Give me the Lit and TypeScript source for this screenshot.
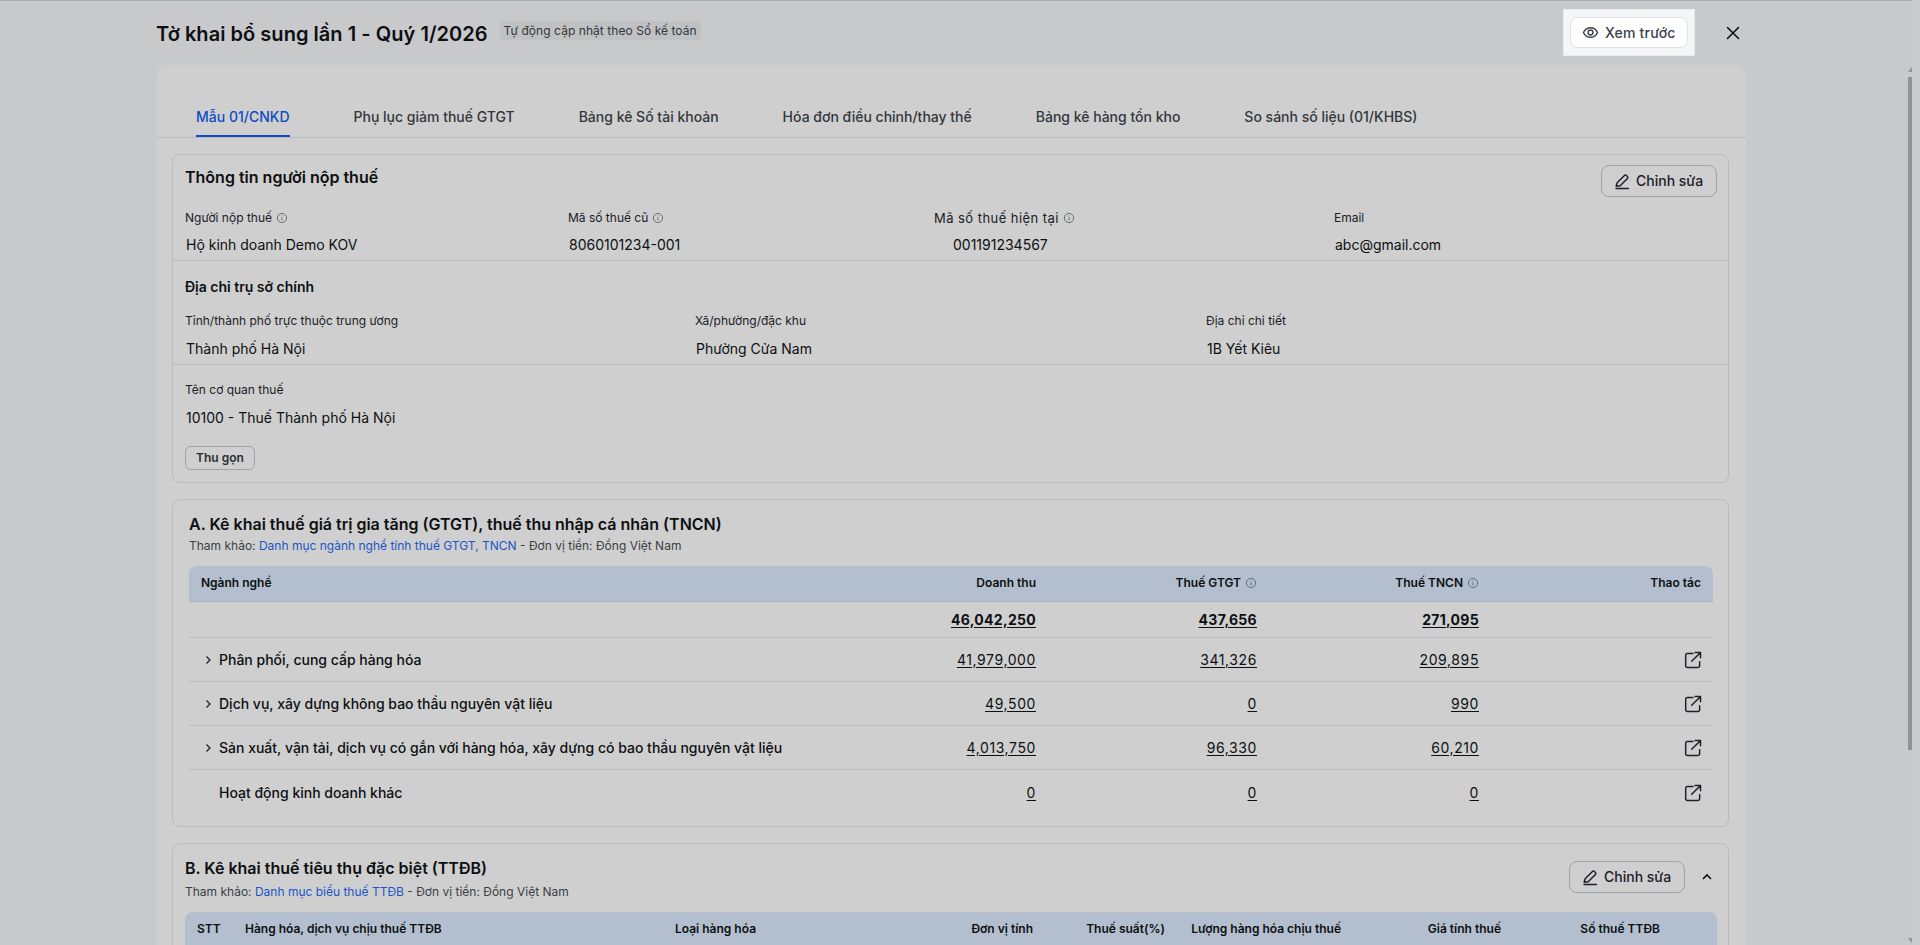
import { LitElement, html, css, svg } from 'lit';
import { customElement } from 'lit/decorators.js';

const infoIcon = html`<svg class="info" viewBox="0 0 12 12" fill="none" stroke="currentColor" stroke-width="1"><circle cx="6" cy="6" r="4.6"></circle><path d="M6 5.4v3M6 3.4v.9"></path></svg>`;
const penIcon = html`<svg class="pen" viewBox="0 0 16 16" fill="none" stroke="currentColor" stroke-width="1.4" stroke-linecap="round" stroke-linejoin="round"><path d="M2 12.4 3 9.2 9.8 2.4a1.3 1.3 0 0 1 1.9 0l.9.9a1.3 1.3 0 0 1 0 1.9L5.800 12z"></path><path d="M2 14.600h11.500"></path></svg>`;
const linkIcon = html`<svg class="open" viewBox="0 0 16 16" fill="none" stroke="currentColor" stroke-width="1.3" stroke-linecap="round" stroke-linejoin="round"><path d="M8 2.300H3a1.500 1.500 0 0 0-1.500 1.500v9.400A1.500 1.500 0 0 0 3 14.700h9.400a1.500 1.500 0 0 0 1.500-1.500V9.500"></path><path d="M6.800 9.200 14.500 1.500M9.800 1.300h4.900v4.800"></path></svg>`;
const chevronRight = svg`<path d="M3.500 1.500 7 5 3.500 8.500"></path>`;

const TABS = ['Mẫu 01/CNKD', 'Phụ lục giảm thuế GTGT', 'Bảng kê Số tài khoản', 'Hóa đơn điều chỉnh/thay thế', 'Bảng kê hàng tồn kho', 'So sánh số liệu (01/KHBS)'];

const ROWS = [
  { name: 'Phân phối, cung cấp hàng hóa', rev: '41,979,000', vat: '341,326', pit: '209,895', more: true },
  { name: 'Dịch vụ, xây dựng không bao thầu nguyên vật liệu', rev: '49,500', vat: '0', pit: '990', more: true },
  { name: 'Sản xuất, vận tải, dịch vụ có gắn với hàng hóa, xây dựng có bao thầu nguyên vật liệu', rev: '4,013,750', vat: '96,330', pit: '60,210', more: true },
  { name: 'Hoạt động kinh doanh khác', rev: '0', vat: '0', pit: '0', more: false },
];

@customElement('app-root')
export class AppRoot extends LitElement {
  static styles = css`
    :host {
      display: block;
      position: relative;
      height: 945px;
      overflow: hidden;
      background: #c8c9cb;
      color: #0d0f12;
      font-family: Inter, "Noto Sans", sans-serif;
      font-size: 14px;
      line-height: 20px;
    }
    svg { display: block; flex: none; }
    .info { width: 12px; height: 12px; color: #6a6e73; }
    .pen { width: 17px; height: 17px; }
    .open { width: 18px; height: 18px; margin-right: -1px; color: #1c2026; }

    .top {
      display: flex;
      height: 64px;
      border-top: 1px solid #a9acaf;
      padding-left: 156px;
      box-sizing: content-box;
    }
    .title { margin: 21px 0 0; font-size: 20px; line-height: 24px; font-weight: 600; letter-spacing: 0.04px; }
    .tag {
      align-self: flex-start;
      margin: 20px 0 0 12px;
      padding: 0 4px;
      height: 19px;
      line-height: 19px;
      font-size: 12px;
      letter-spacing: 0.06px;
      color: #33373c;
      background: #bfc1c3;
      border-radius: 4px;
    }
    .spot {
      align-self: flex-start;
      margin: 8px 0 0 auto;
      padding: 7px 6px;
      background: #f5f6f8;
      border: 1px solid #e9eaec;
    }
    .preview {
      display: flex;
      align-items: center;
      gap: 6px;
      box-sizing: border-box;
      width: 118px;
      height: 31px;
      padding-left: 11px;
      background: #fff;
      border: 1px solid #dfe1e4;
      border-radius: 8px;
      color: #3c4148;
      font-weight: 500;
      font-size: 14px;
      letter-spacing: 0.2px;
    }
    .preview svg { width: 17px; height: 17px; }
    .close { width: 16px; height: 16px; margin: 24px 179px 0 30px; color: #0d0f12; }

    .sheet {
      width: 1590px;
      margin-left: 156px;
      height: 880px;
      background: #cfcfcf;
      border-radius: 12px 12px 0 0;
    }
    .tabs {
      display: flex;
      gap: 64px;
      height: 73px;
      box-sizing: border-box;
      padding-left: 40px;
      border-bottom: 1px solid #b9bbbe;
      align-items: flex-end;
    }
    .tab {
      height: 30px;
      box-sizing: border-box;
      font-weight: 500;
      color: #33373c;
      white-space: nowrap;
    }
    .tab.on { color: #0f4cc4; border-bottom: 2px solid #0f4cc4; }

    .card {
      margin: 16px 17px 0 16px;
      border: 1px solid #b9bbbe;
      border-radius: 8px;
    }
    .info-card { height: 329px; box-sizing: border-box; }
    .head {
      display: flex;
      justify-content: space-between;
      height: 53px;
      padding: 10px 11px 0 12px;
      box-sizing: border-box;
    }
    .head h3 { margin: 1px 0 0; font-size: 16px; line-height: 22px; font-weight: 600; }
    .edit {
      display: flex;
      align-items: center;
      gap: 5px;
      box-sizing: border-box;
      width: 116px;
      height: 32px;
      padding-left: 12px;
      border: 1px solid #a0a3a7;
      border-radius: 8px;
      font-weight: 500;
      color: #1c2026;
    }
    .fields {
      display: grid;
      grid-template-columns: 383px 366px 400px 1fr;
      padding: 0 12px 5px;
      height: 53px;
      box-sizing: border-box;
      border-bottom: 1px solid #b9bbbe;
    }
    .label { display: flex; align-items: center; gap: 4px; font-size: 12px; color: #1c2026; }
    .label.wide { font-size: 13px; letter-spacing: 0.45px; }
    .value { margin: 7px 0 0 1px; font-size: 14px; }
    .value.indent { margin-left: 19px; }
    .address { padding: 16px 12px 5px; border-bottom: 1px solid #b9bbbe; }
    .address h4 { margin: 0 0 14px; font-size: 14px; line-height: 20px; font-weight: 600; }
    .address-grid { display: grid; grid-template-columns: 510px 511px 1fr; }
    .address .value, .authority .value { margin-top: 8px; }
    .authority { padding: 15px 12px 0; }
    .collapse {
      margin-top: 18px;
      width: 70px;
      height: 24px;
      box-sizing: border-box;
      border: 1px solid #a0a3a7;
      border-radius: 6px;
      text-align: center;
      line-height: 22px;
      font-size: 12px;
      font-weight: 600;
      color: #2a2e34;
    }

    .sec-a { height: 328px; box-sizing: border-box; padding: 12px 15px 0 16px; }
    .sec-title { margin: 0; font-size: 16px; line-height: 24px; font-weight: 600; }
    .sub { margin: 1px 0 0; line-height: 18px; font-size: 12px; color: #3b4046; }
    .sub a { color: #1a55c6; }

    .table-a { margin-top: 11px; }
    .row {
      display: grid;
      grid-template-columns: 1fr 200px 221px 222px 222px;
      padding: 0 12px;
      align-items: center;
      height: 44px;
      border-bottom: 1px solid #b9bbbe;
      box-sizing: border-box;
    }
    .row > :not(:first-child) { justify-self: end; }
    .row.hd {
      height: 36px;
      align-items: start;
      padding-top: 7px;
      background: #b3bfce;
      border-bottom-color: #a5b4c9;
      border-radius: 8px 8px 0 0;
      font-size: 12px;
      font-weight: 600;
    }
    .row.total { height: 36px; font-weight: 700; letter-spacing: 0.3px; }
    .row.last { border-bottom: none; height: 46px; }
    .with-info { display: flex; align-items: center; gap: 4px; }
    .name { display: flex; align-items: center; gap: 6px; font-weight: 500; white-space: nowrap; }
    .name .chev { width: 10px; height: 10px; margin-left: 2px; stroke: #1c2026; stroke-width: 1.3; fill: none; }
    .name .blank { width: 10px; height: 10px; margin-left: 2px; }
    .num { text-decoration: underline; text-underline-offset: 2px; }
    .row:not(.total) .num { letter-spacing: 0.6px; }

    .sec-b { padding: 0 11px 0 12px; height: 200px; box-sizing: border-box; }
    .b-head { display: flex; justify-content: space-between; }
    .b-text { padding-top: 12px; }
    .b-text .sub { margin-top: 3px; }
    .b-actions { display: flex; align-items: flex-start; margin-top: 17px; }
    .b-actions .up { width: 12px; height: 12px; margin: 10px 4px 0 16px; stroke: #0d0f12; stroke-width: 1.6; fill: none; }
    .table-b {
      display: grid;
      grid-template-columns: 48px 430px 258px 100px 132px 176px 160px 159px;
      margin-top: 11px;
      height: 60px;
      padding: 7px 0 0 12px;
      box-sizing: border-box;
      background: #b3bfce;
      border-radius: 8px 8px 0 0;
      font-size: 12px;
      font-weight: 600;
    }
    .table-b .r { text-align: right; }

    .thumb { position: absolute; left: 1908px; top: 77px; width: 4px; height: 673px; background: #8f9499; }
    .track { position: absolute; left: 1912px; top: 0; width: 8px; height: 945px; background: #cbcbcb; }
    .arrow { position: absolute; left: 1908px; width: 4px; height: 5px; }
  `;

  render() {
    return html`
      <div class="top">
        <h1 class="title">Tờ khai bổ sung lần 1 - Quý 1/2026</h1>
        <span class="tag">Tự động cập nhật theo Sổ kế toán</span>
        <div class="spot">
          <div class="preview">
            <svg viewBox="0 0 18 18" fill="none" stroke="currentColor" stroke-width="1.5"><path d="M1.500 9C3.200 5.600 5.800 3.900 9 3.900S14.800 5.600 16.500 9C14.800 12.400 12.200 14.100 9 14.100S3.200 12.400 1.500 9Z"></path><circle cx="9" cy="9" r="2.600"></circle></svg>
            Xem trước
          </div>
        </div>
        <svg class="close" viewBox="0 0 16 16" fill="none" stroke="currentColor" stroke-width="1.6" stroke-linecap="round"><path d="M2.500 2.500 13.500 13.500M13.500 2.500 2.500 13.500"></path></svg>
      </div>

      <div class="sheet">
        <div class="tabs">
          ${TABS.map((t, i) => html`<div class="tab ${i === 0 ? 'on' : ''}">${t}</div>`)}
        </div>

        <div class="card info-card">
          <div class="head">
            <h3>Thông tin người nộp thuế</h3>
            <div class="edit">${penIcon}Chỉnh sửa</div>
          </div>
          <div class="fields">
            <div><div class="label">Người nộp thuế ${infoIcon}</div><div class="value">Hộ kinh doanh Demo KOV</div></div>
            <div><div class="label">Mã số thuế cũ ${infoIcon}</div><div class="value">8060101234-001</div></div>
            <div><div class="label wide">Mã số thuế hiện tại ${infoIcon}</div><div class="value indent">001191234567</div></div>
            <div><div class="label">Email</div><div class="value">abc@gmail.com</div></div>
          </div>
          <div class="address">
            <h4>Địa chỉ trụ sở chính</h4>
            <div class="address-grid">
              <div><div class="label">Tỉnh/thành phố trực thuộc trung ương</div><div class="value">Thành phố Hà Nội</div></div>
              <div><div class="label">Xã/phường/đặc khu</div><div class="value">Phường Cửa Nam</div></div>
              <div><div class="label">Địa chỉ chi tiết</div><div class="value">1B Yết Kiêu</div></div>
            </div>
          </div>
          <div class="authority">
            <div class="label">Tên cơ quan thuế</div>
            <div class="value">10100 - Thuế Thành phố Hà Nội</div>
            <div class="collapse">Thu gọn</div>
          </div>
        </div>

        <div class="card sec-a">
          <h2 class="sec-title">A. Kê khai thuế giá trị gia tăng (GTGT), thuế thu nhập cá nhân (TNCN)</h2>
          <p class="sub">Tham khảo: <a>Danh mục ngành nghề tính thuế GTGT, TNCN</a> - Đơn vị tiền: Đồng Việt Nam</p>
          <div class="table-a">
            <div class="row hd">
              <div>Ngành nghề</div>
              <div>Doanh thu</div>
              <div class="with-info">Thuế GTGT ${infoIcon}</div>
              <div class="with-info">Thuế TNCN ${infoIcon}</div>
              <div>Thao tác</div>
            </div>
            <div class="row total">
              <div></div>
              <div class="num">46,042,250</div>
              <div class="num">437,656</div>
              <div class="num">271,095</div>
              <div></div>
            </div>
            ${ROWS.map((r, i) => html`
              <div class="row ${i === ROWS.length - 1 ? 'last' : ''}">
                <div class="name">
                  ${r.more ? html`<svg class="chev" viewBox="0 0 10 10">${chevronRight}</svg>` : html`<span class="blank"></span>`}
                  ${r.name}
                </div>
                <div class="num">${r.rev}</div>
                <div class="num">${r.vat}</div>
                <div class="num">${r.pit}</div>
                ${linkIcon}
              </div>
            `)}
          </div>
        </div>

        <div class="card sec-b">
          <div class="b-head">
            <div class="b-text">
              <h2 class="sec-title">B. Kê khai thuế tiêu thụ đặc biệt (TTĐB)</h2>
              <p class="sub">Tham khảo: <a>Danh mục biểu thuế TTĐB</a> - Đơn vị tiền: Đồng Việt Nam</p>
            </div>
            <div class="b-actions">
              <div class="edit">${penIcon}Chỉnh sửa</div>
              <svg class="up" viewBox="0 0 12 12"><path d="M2 8 6 4l4 4"></path></svg>
            </div>
          </div>
          <div class="table-b">
            <div>STT</div>
            <div>Hàng hóa, dịch vụ chịu thuế TTĐB</div>
            <div>Loại hàng hóa</div>
            <div class="r">Đơn vị tính</div>
            <div class="r">Thuế suất(%)</div>
            <div class="r">Lượng hàng hóa chịu thuế</div>
            <div class="r">Giá tính thuế</div>
            <div class="r">Số thuế TTĐB</div>
          </div>
        </div>
      </div>

      <div class="track"></div>
      <div class="thumb"></div>
      <svg class="arrow" style="top: 67px" viewBox="0 0 4 5"><path d="M4 0v5H0z" fill="#8f9499"></path></svg>
      <svg class="arrow" style="top: 938px" viewBox="0 0 4 5"><path d="M0 0h4v5z" fill="#8f9499"></path></svg>
    `;
  }
}
